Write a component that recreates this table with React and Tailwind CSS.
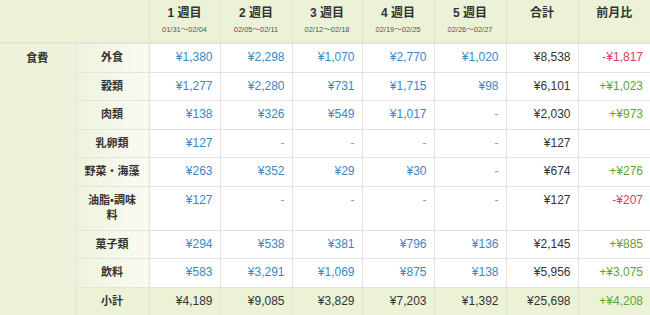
import React from 'react';

const weeks = [
    { label: '1 週目', range: '01/31〜02/04' },
    { label: '2 週目', range: '02/05〜02/11' },
    { label: '3 週目', range: '02/12〜02/18' },
    { label: '4 週目', range: '02/19〜02/25' },
    { label: '5 週目', range: '02/26〜02/27' },
];

const rows = [
    { name: '外食', values: ['¥1,380', '¥2,298', '¥1,070', '¥2,770', '¥1,020'], total: '¥8,538', diff: '-¥1,817' },
    { name: '穀類', values: ['¥1,277', '¥2,280', '¥731', '¥1,715', '¥98'], total: '¥6,101', diff: '+¥1,023' },
    { name: '肉類', values: ['¥138', '¥326', '¥549', '¥1,017', '-'], total: '¥2,030', diff: '+¥973' },
    { name: '乳卵類', values: ['¥127', '-', '-', '-', '-'], total: '¥127', diff: '' },
    { name: '野菜・海藻', values: ['¥263', '¥352', '¥29', '¥30', '-'], total: '¥674', diff: '+¥276' },
    { name: '油脂•調味料', values: ['¥127', '-', '-', '-', '-'], total: '¥127', diff: '-¥207' },
    { name: '菓子類', values: ['¥294', '¥538', '¥381', '¥796', '¥136'], total: '¥2,145', diff: '+¥885' },
    { name: '飲料', values: ['¥583', '¥3,291', '¥1,069', '¥875', '¥138'], total: '¥5,956', diff: '+¥3,075' },
];

const subtotal = {
    values: ['¥4,189', '¥9,085', '¥3,829', '¥7,203', '¥1,392'],
    total: '¥25,698',
    diff: '+¥4,208',
};

function diffColor(diff) {
    if (diff.startsWith('-')) return 'text-[#e0386a]';
    return 'text-[#5ba632]';
}

export default function App() {
    return (
        <div
            className="w-[650px] h-[315px] overflow-hidden bg-white text-[#333]"
            style={{ fontFamily: '"Liberation Sans", "Noto Sans CJK JP", sans-serif' }}
        >
            <table className="w-[650px] border-collapse table-fixed">
                <colgroup>
                    <col className="w-[75px]" />
                    <col className="w-[74px]" />
                    <col className="w-[71px]" />
                    <col className="w-[72px]" />
                    <col className="w-[70px]" />
                    <col className="w-[72px]" />
                    <col className="w-[72px]" />
                    <col className="w-[72px]" />
                    <col className="w-[72px]" />
                </colgroup>
                <thead>
                    <tr className="bg-[#ecf2d8] h-[43px]">
                        <th colSpan={2} className="border-b-2 border-[#e2e6d8]"></th>
                        {weeks.map((w) => (
                            <th
                                key={w.label}
                                className="align-top pt-[6px] border-l border-b-2 border-[#e2e6d8] font-bold text-center"
                            >
                                <div className="text-[12px] leading-[15px]">{w.label}</div>
                                <div className="text-[7.5px] leading-[12px] mt-[3px] font-normal text-[#555]">
                                    {w.range}
                                </div>
                            </th>
                        ))}
                        <th className="align-top pt-[6px] border-l border-b-2 border-[#e2e6d8] text-[12px] leading-[15px] font-bold">
                            合計
                        </th>
                        <th className="align-top pt-[6px] border-l border-b-2 border-[#e2e6d8] text-[12px] leading-[15px] font-bold">
                            前月比
                        </th>
                    </tr>
                </thead>
                <tbody className="text-[12px] leading-[15px]">
                    {rows.map((r, i) => (
                        <tr key={r.name}>
                            {i === 0 && (
                                <td
                                    rowSpan={rows.length + 1}
                                    className="align-top pt-[7px] text-center font-bold bg-[#eef4dc] text-[11px]"
                                >
                                    食費
                                </td>
                            )}
                            <td className="align-top pt-[6px] pb-[6px] px-[8px] h-[28.5px] text-center font-bold text-[11px] leading-[15.5px] border-l border-b border-[#e3e3e3] bg-gradient-to-r from-[#eef3dc] to-[#f9fbf3]">
                                {r.name}
                            </td>
                            {r.values.map((v, j) => (
                                <td
                                    key={j}
                                    className={`align-top pt-[6px] pr-[7px] text-right border-l border-b border-[#e3e3e3] ${
                                        v === '-' ? 'text-[#999]' : 'text-[#3b88c3]'
                                    }`}
                                >
                                    {v}
                                </td>
                            ))}
                            <td className="align-top pt-[6px] pr-[7px] text-right border-l border-b border-[#e3e3e3] text-[#333]">
                                {r.total}
                            </td>
                            <td
                                className={`align-top pt-[6px] pr-[7px] text-right border-l border-b border-[#e3e3e3] ${diffColor(r.diff)}`}
                            >
                                {r.diff}
                            </td>
                        </tr>
                    ))}
                    <tr className="bg-[#ebf2d6]">
                        <td className="align-top pt-[6px] pb-[6px] h-[28.5px] text-center font-bold text-[11px] border-l border-b-2 border-[#dfe3d5]">
                            小計
                        </td>
                        {subtotal.values.map((v, j) => (
                            <td
                                key={j}
                                className="align-top pt-[6px] pr-[7px] text-right border-l border-b-2 border-[#dfe3d5] text-[#333]"
                            >
                                {v}
                            </td>
                        ))}
                        <td className="align-top pt-[6px] pr-[7px] text-right border-l border-b-2 border-[#dfe3d5] text-[#333]">
                            {subtotal.total}
                        </td>
                        <td className="align-top pt-[6px] pr-[7px] text-right border-l border-b-2 border-[#dfe3d5] text-[#5ba632]">
                            {subtotal.diff}
                        </td>
                    </tr>
                </tbody>
            </table>
        </div>
    );
}
